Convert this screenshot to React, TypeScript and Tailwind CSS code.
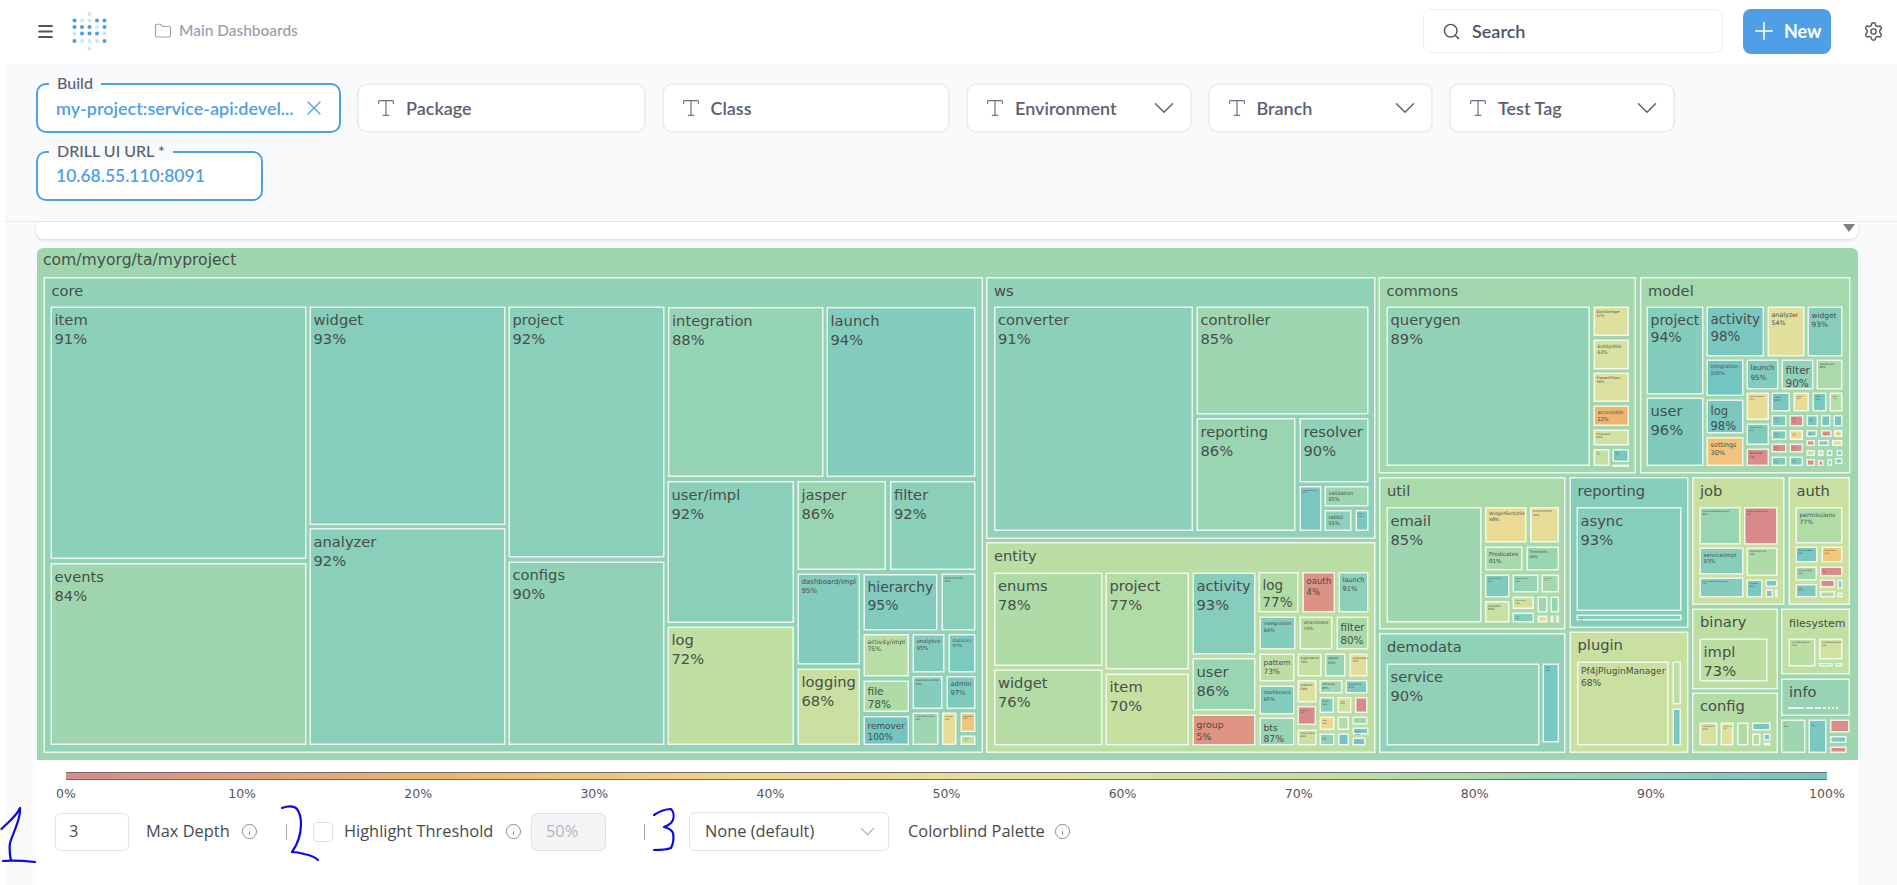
import { ChevronDown, Folder, Info, Menu, Plus, Search, Settings, Type, X } from "lucide-react";

type Node = [string, number | null, number, number, number, number, number?];

const stops: [number, number[]][] = [
  [0, [216, 138, 138]],
  [20, [236, 178, 108]],
  [40, [243, 214, 140]],
  [60, [219, 226, 161]],
  [70, [197, 224, 160]],
  [80, [170, 218, 169]],
  [90, [144, 209, 184]],
  [100, [115, 197, 193]],
];

function fill(p: number) {
  for (let i = 1; i < stops.length; i++) {
    if (p <= stops[i][0]) {
      const [a, ca] = stops[i - 1];
      const [b, cb] = stops[i];
      const t = (p - a) / (b - a);
      return `rgb(${ca.map((c, k) => Math.round(c + (cb[k] - c) * t)).join(",")})`;
    }
  }
  return "rgb(115,197,193)";
}

const W: Record<string, number> = {
  a: 0.61, b: 0.63, c: 0.55, d: 0.63, e: 0.62, f: 0.35, g: 0.63, h: 0.63, i: 0.28, j: 0.28, k: 0.58, l: 0.28, m: 0.97,
  n: 0.63, o: 0.61, p: 0.63, q: 0.63, r: 0.41, s: 0.52, t: 0.39, u: 0.63, v: 0.59, w: 0.82, x: 0.59, y: 0.59, z: 0.53,
  "/": 0.34, "%": 0.95,
};
const em = (s: string) => s.split("").reduce((n, ch) => n + (W[ch] ?? (ch >= "0" && ch <= "9" ? 0.636 : 0.66)), 0);

const containers: Node[] = [
  ["core", 89, 43.5, 276, 983, 752],
  ["ws", 90, 986, 276, 1375.5, 538],
  ["entity", 74, 986, 541, 1375.5, 752],
  ["commons", 83, 1378.5, 276, 1636, 472.5],
  ["model", 82, 1640, 276, 1850.5, 472.5],
  ["util", 80, 1379, 476, 1565.5, 628.5],
  ["demodata", 90, 1379, 632, 1565.5, 752],
  ["reporting", 93, 1569.5, 476, 1688.5, 627],
  ["plugin", 68, 1569.5, 630.5, 1688.5, 752],
  ["job", 69, 1692, 476, 1784.5, 604],
  ["auth", 68, 1788.5, 476, 1850, 604],
  ["binary", 73, 1692, 607.5, 1778, 688.5],
  ["config", 76, 1692, 691.5, 1778, 752],
  ["filesystem", 72, 1781, 607.5, 1850, 673.5, 11],
  ["info", 87, 1781, 677.5, 1850, 715],
];

const leaves: Node[] = [
  ["item", 91, 50.5, 305.5, 306.5, 558],
  ["events", 84, 50.5, 562, 306.5, 744],
  ["widget", 93, 309.5, 305.5, 505.5, 524],
  ["analyzer", 92, 309.5, 527, 505.5, 744],
  ["project", 92, 508.5, 305.5, 664.5, 556.5],
  ["configs", 90, 508.5, 560.5, 664.5, 744],
  ["integration", 88, 668, 306, 823.5, 476],
  ["launch", 94, 826.5, 306, 975.5, 476],
  ["user/impl", 92, 667.5, 480, 794, 622],
  ["log", 72, 667.5, 625.5, 794, 744],
  ["jasper", 86, 797.5, 480, 886, 569],
  ["filter", 92, 890, 480, 975.5, 569],
  ["dashboard/impl", 95, 797.5, 572.5, 860, 663.5],
  ["logging", 68, 797.5, 667.5, 860, 744],
  ["hierarchy", 95, 863.5, 573, 937.5, 629.5],
  ["timeline/impl", 92, 941.5, 572.5, 975.5, 629.5, 2.8],
  ["activity/impl", 75, 863.5, 633, 909, 675.5],
  ["analytics", 95, 912.5, 633, 944.5, 671.5],
  ["statistics", 97, 948.5, 633, 975.5, 671.5],
  ["preferences/impl", 94, 912.5, 675, 942.5, 708, 2.8],
  ["admin", 97, 946.5, 675, 975.5, 708],
  ["file", 78, 863.5, 679.5, 909, 711],
  ["remover", 100, 863.5, 715, 909, 744],
  ["organization/impl", 85, 912.5, 711.5, 938.5, 744, 2.2],
  ["storage", 52, 942, 711.5, 956.5, 744, 2],
  ["metadata", 30, 960.5, 711.5, 975.5, 731, 1.8],
  ["quality", 70, 960.5, 734.5, 975.5, 744, 1.5],

  ["converter", 91, 994, 305.5, 1193, 530],
  ["controller", 85, 1196.5, 305.5, 1368.5, 413.5],
  ["reporting", 86, 1196.5, 417, 1295.5, 530],
  ["resolver", 90, 1299.5, 417, 1368.5, 481.5],
  ["exception/impl", 98, 1299.5, 485, 1321.5, 530, 2],
  ["validation", 85, 1324.5, 485, 1368.5, 505.5, 5],
  ["rabbit", 91, 1324.5, 509, 1351.5, 530, 5],
  ["aop", 98, 1355.5, 509, 1368.5, 530, 1.8],

  ["enums", 78, 994, 571.5, 1102.5, 665],
  ["widget", 76, 994, 668.5, 1102.5, 744.5],
  ["project", 77, 1105.5, 571.5, 1189, 668.5],
  ["item", 70, 1105.5, 672.5, 1189, 744.5],
  ["activity", 93, 1192.5, 571.5, 1255.5, 653.5],
  ["user", 86, 1192.5, 657, 1255.5, 709.5],
  ["group", 5, 1192.5, 713.5, 1255.5, 744.5, 9.4],
  ["log", 77, 1258.5, 571, 1298.5, 611.5, 13.5],
  ["oauth", 4, 1302.5, 571, 1335, 611.5],
  ["launch", 91, 1338.5, 571, 1368.5, 611.5],
  ["integration", 94, 1259.5, 615.5, 1295.5, 648.5],
  ["attachment", 73, 1299.5, 615.5, 1332.5, 648.5],
  ["filter", 80, 1336.5, 615.5, 1368.5, 648.5],
  ["pattern", 73, 1259.5, 652.5, 1294.5, 680.5],
  ["dashboard", 95, 1259.5, 684.5, 1294.5, 713.5],
  ["bts", 87, 1259.5, 716.5, 1294.5, 744.5],
  ["organization", 70, 1297.5, 652.5, 1321.5, 675.5, 3],
  ["jasper", 88, 1325, 652.5, 1345.5, 675.5, 3.4],
  ["widgetstate", 52, 1349.5, 652.5, 1367.5, 675.5, 2.6],
  ["statistic", 60, 1297.5, 679, 1316.5, 701.5, 3.2],
  ["attribute", 85, 1319.5, 679, 1342.5, 692.5, 2.8],
  ["preference", 97, 1345.5, 679, 1367.5, 692.5, 2.4],
  ["ticket", 94, 1319.5, 696, 1334, 712, 2.2],
  ["clan", 65, 1337.5, 696, 1351.5, 712, 2],
  ["share", 0, 1355, 696, 1367.5, 712, 0.1],
  ["settings", 0, 1297.5, 705, 1316, 724, 2],
  ["user", 45, 1319.5, 715.5, 1334.5, 729, 2],
  ["meta", 76, 1337.5, 715.5, 1349, 729, 0.1],
  ["log", 84, 1352.5, 715.5, 1367.5, 723.5, 0.1],
  ["auth", 98, 1352.5, 726.5, 1368.5, 733.5, 2],
  ["attachments", 68, 1297.5, 728.5, 1316.5, 744.5, 2.4],
  ["type", 90, 1319.5, 732.5, 1334.5, 744.5, 1.8],
  ["key", 100, 1338, 732.5, 1349, 744.5, 0.1],
  ["sort", 100, 1352.5, 736.5, 1365.5, 744.5, 0.1],

  ["querygen", 89, 1386.5, 305.5, 1590, 465],
  ["BarAlikeType", 57, 1593.5, 305.5, 1629, 335, 3.6],
  ["EntityUtils", 62, 1593.5, 338.5, 1629, 368.5, 4.6],
  ["PresentFilters", 58, 1593.5, 371.5, 1629, 401, 3.5],
  ["accessible", 22, 1593.5, 404.5, 1629, 425, 5],
  ["Predicates", 64, 1593.5, 428.5, 1629, 444.5, 2.7],
  ["Utils", 70, 1593.5, 448, 1609.5, 465, 1.6],
  ["Maps", 98, 1612.5, 448, 1629, 461, 1.6],
  ["S", 80, 1612.5, 463.5, 1629, 466, 0.1],

  ["project", 94, 1646.5, 305.5, 1703.5, 393.5],
  ["user", 96, 1646.5, 396.5, 1703.5, 465],
  ["activity", 98, 1706.5, 305.5, 1764, 355.5],
  ["analyzer", 54, 1767.5, 305.5, 1804.5, 355.5, 6.3],
  ["widget", 93, 1807.5, 305.5, 1842.5, 355.5, 7.4],
  ["integration", 100, 1706.5, 358.5, 1743.5, 395, 5],
  ["log", 98, 1706.5, 398.5, 1743.5, 432.5, 11.5],
  ["settings", 30, 1706.5, 436, 1743.5, 465, 6.5],
  ["launch", 95, 1746.5, 358.5, 1778.5, 388.5],
  ["filter", 90, 1781.5, 358.5, 1813.5, 388.5, 10.5],
  ["dashboard", 80, 1816.5, 358.5, 1842.5, 388.5, 2.8],
  ["reportingstate", 50, 1746.5, 391.5, 1769, 419, 2],
  ["organization", 96, 1746.5, 422.5, 1769, 444, 2],
  ["launcher", 2, 1746.5, 447.5, 1769, 465, 3],
  ["issue", 98, 1771.5, 391.5, 1790, 410.5, 2.6],
  ["widget", 48, 1793.5, 391.5, 1809, 410.5, 1.8],
  ["filter", 98, 1812.5, 391.5, 1826.5, 410.5, 2],
  ["attrs", 75, 1829.5, 391.5, 1842.5, 410.5, 1.8],
  ["log", 97, 1771.5, 414, 1786.5, 425.5, 1.8],
  ["bts", 1, 1789.5, 414, 1803.5, 425.5, 1.8],
  ["tag", 98, 1806.5, 414, 1818, 425.5, 1.6],
  ["id", 100, 1821, 414, 1830.5, 425.5, 0.1],
  ["ns", 100, 1833.5, 414, 1842.5, 425.5, 0.1],
  ["pref", 97, 1771.5, 429, 1786.5, 439, 1.8],
  ["api", 45, 1789.5, 429, 1803, 439, 1.6],
  ["ann", 97, 1806.5, 429, 1817, 436, 1.2],
  ["red", 2, 1821, 429, 1831.5, 436, 1.2],
  ["yel", 45, 1834, 429, 1842.5, 436, 1.2],
  ["red", 2, 1771.5, 442.5, 1786.5, 451.5, 1.8],
  ["red", 2, 1789.5, 442.5, 1803, 451.5, 1.6],
  ["red", 2, 1806.5, 439, 1815, 445, 0.1],
  ["tea", 97, 1818, 439, 1829, 445, 0.1],
  ["yel", 45, 1832, 439, 1842.5, 445, 0.1],
  ["tea", 97, 1771.5, 455.5, 1786.5, 465, 1.6],
  ["tea", 97, 1789.5, 455.5, 1803, 465, 1.6],
  ["lim", 72, 1806.5, 449, 1815, 455, 0.1],
  ["lim", 72, 1818, 449, 1823.5, 455, 0.1],
  ["tea", 97, 1827, 449, 1832.5, 455, 0.1],
  ["tea", 97, 1836.5, 449, 1842.5, 455, 0.1],
  ["red", 2, 1806.5, 458, 1815, 465, 0.1],
  ["red", 2, 1818, 459, 1823.5, 465, 0.1],
  ["tea", 97, 1827.5, 458, 1832, 465, 0.1],
  ["tea", 97, 1835, 457, 1842.5, 463, 0.1],

  ["email", 85, 1386.5, 506, 1481.5, 621.5],
  ["WidgetSortUtils", 48, 1485, 506, 1526.5, 541.5, 4.6],
  ["CommonUtils", 52, 1530, 506, 1559, 541.5, 2.8],
  ["Predicates", 81, 1485, 545.5, 1522.5, 569.5, 5.6],
  ["TimeUtils", 86, 1526.5, 545.5, 1559, 569.5, 3.8],
  ["ExceptionUtils", 96, 1485, 573.5, 1509.5, 596.5, 2],
  ["SecurityUtils", 88, 1512.5, 573.5, 1538.5, 591.5, 2],
  ["DateUtils", 82, 1541.5, 573.5, 1559, 591.5, 1.6],
  ["SortUtils", 68, 1485, 600, 1509.5, 621.5, 3],
  ["ActionUtils", 64, 1512.5, 595.5, 1534, 608, 2],
  ["Ns", 84, 1537.5, 595.5, 1547.5, 611.5, 0.1],
  ["Bs", 88, 1550.5, 595.5, 1559, 611.5, 0.1],
  ["Logs", 94, 1512.5, 611.5, 1534, 621.5, 1.6],
  ["Cs", 52, 1537.5, 614.5, 1547.5, 621.5, 0.1],
  ["As", 100, 1550.5, 614.5, 1553.5, 621.5, 0.1],
  ["Ds", 100, 1556, 614.5, 1559, 621.5, 0.1],

  ["service", 90, 1386.5, 662.5, 1539.5, 744.5],
  ["impl", 98, 1542.5, 662.5, 1559, 741.5, 2],
  ["async", 93, 1576.5, 506, 1681.5, 610],
  ["jobs", 93, 1576.5, 613.5, 1681.5, 619.5, 1.6],
  ["Pf4jPluginManager", 68, 1577, 660.5, 1668.5, 744.5],
  ["a", 74, 1672.5, 660.5, 1681, 703.5, 0.1],
  ["b", 98, 1672.5, 707.5, 1681, 744.5, 0.1],

  ["ConsolidatedPluginJob", 86, 1699.5, 506, 1740.5, 543.5, 2.4],
  ["FlushingSessions", 0, 1744, 506, 1777.5, 543.5, 2.4],
  ["service/impl", 93, 1699.5, 546.5, 1743.5, 573.5, 5.4],
  ["LoadPluginJob", 78, 1746.5, 546.5, 1777.5, 575, 2.4],
  ["InterruptBroadcastPluginsJob", 94, 1699.5, 576.5, 1743.5, 596.5, 1.8],
  ["CleanJob", 98, 1746.5, 578.5, 1762.5, 596.5, 2],
  ["a", 98, 1765.5, 578.5, 1777.5, 586, 0.1],
  ["b", 98, 1765.5, 588.5, 1773, 596.5, 0.1],
  ["c", 76, 1775, 588.5, 1777.5, 596.5, 0.1],
  ["permissions", 77, 1795.5, 506, 1842.5, 542.5, 6],
  ["ReportingRole", 98, 1795.5, 545.5, 1817.5, 561.5, 2],
  ["ProjectRole", 32, 1821.5, 545.5, 1842.5, 561.5, 2],
  ["AuthorityRole", 84, 1795.5, 565.5, 1817, 579.5, 2],
  ["Rr", 1, 1820, 565.5, 1842.5, 575.5, 1.8],
  ["Utils", 97, 1795.5, 583, 1817, 596.5, 2],
  ["Rs", 1, 1820, 578.5, 1835, 586.5, 0.1],
  ["Ts", 98, 1837.5, 578.5, 1842.5, 588, 0.1],
  ["Gs", 78, 1820, 590, 1835, 596.5, 0.1],
  ["Hs", 76, 1837.5, 591.5, 1842.5, 596.5, 0.1],
  ["impl", 73, 1699.5, 637.5, 1767.5, 680.5],
  ["configure", 62, 1699.5, 721.5, 1717.5, 744.5, 2.4],
  ["LogManage", 55, 1720.5, 721.5, 1733.5, 744.5, 1.6],
  ["Metrics", 78, 1737, 721.5, 1748.5, 744.5, 0.1],
  ["a", 98, 1752, 721.5, 1770.5, 729.5, 0.1],
  ["b", 76, 1752, 732.5, 1760.5, 744.5, 0.1],
  ["c", 98, 1763.5, 732.5, 1770.5, 739.5, 0.1],
  ["d", 80, 1763.5, 741.5, 1770.5, 744.5, 0.1],
  ["LocalDataStore", 74, 1788.5, 637.5, 1815.5, 665.5, 2.4],
  ["LocalUserStorage", 64, 1819, 637.5, 1842.5, 658.5, 2.2],
  ["a", 98, 1819, 662, 1832.5, 665.5, 0.1],
  ["b", 98, 1835.5, 662, 1842.5, 665.5, 0.1],
  ["a", 84, 1781, 718.5, 1805.5, 752, 2],
  ["b", 98, 1808.5, 718.5, 1826.5, 752, 1.6],
  ["c", 2, 1830, 718.5, 1849.5, 731.5, 0.1],
  ["d", 97, 1830, 735, 1846.5, 742, 0.1],
  ["e", 2, 1830, 745.5, 1846.5, 752, 0.1],
];

function Leaf({ n }: { n: Node }) {
  const [label, pct, x1, y1, x2, y2, forced] = n;
  const w = x2 - x1;
  const h = y2 - y1;
  const p = pct ?? 0;
  const ps = `${p}%`;
  const fit = Math.min(14.7, (w - 8) / Math.max(em(label), em(ps)), (h - 5) / 2.5);
  const fs = forced ?? fit;
  const pad = fs < 4 ? 3 : 4;
  return (
    <g>
      <rect x={x1 + 0.75} y={y1 + 0.75} width={w - 1.5} height={h - 1.5} fill={fill(p)} stroke="#fff" strokeOpacity={0.8} strokeWidth={1.5} />
      {fs > 1 && (
        <text x={x1 + pad} fontSize={fs} fill="#474e4c">
          <tspan x={x1 + pad} y={y1 + pad - 0.6 + fs * 1.05}>{label}</tspan>
          <tspan x={x1 + pad} y={y1 + pad - 0.6 + fs * 2.32}>{ps}</tspan>
        </text>
      )}
    </g>
  );
}

function Container({ n }: { n: Node }) {
  const [label, pct, x1, y1, x2, y2, forced] = n;
  return (
    <g>
      <rect x={x1 + 0.75} y={y1 + 0.75} width={x2 - x1 - 1.5} height={y2 - y1 - 1.5} fill={fill(pct ?? 0)} stroke="#fff" strokeOpacity={0.8} strokeWidth={1.5} />
      <text x={x1 + 8} y={y1 + 18.6} fontSize={forced ?? 14.7} fill="#474e4c">{label}</text>
    </g>
  );
}

function Treemap() {
  return (
    <svg viewBox="37 247 1821 512" width={1821} height={512} className="block" style={{ fontFamily: '"DejaVu Sans", sans-serif' }}>
      <path d="M37 759V253a6 6 0 0 1 6-6H1852a6 6 0 0 1 6 6V759Z" fill={fill(84)} />
      <text x={43} y={264} fontSize={15.6} fill="#474e4c">com/myorg/ta/myproject</text>
      {containers.map((n, i) => <Container key={i} n={n} />)}
      {leaves.map((n, i) => <Leaf key={i} n={n} />)}
      <g stroke="#fff" strokeWidth={1.5}>
        <path d="M1788 707H1804M1806 707H1813M1815 707H1821M1823 707H1826M1828 707H1830M1832 707H1834M1836 707H1838" />
      </g>
    </svg>
  );
}

function FieldLabel({ children }: { children: string }) {
  return (
    <span className="absolute -top-[11px] left-[11px] bg-[#f9fafc] px-2 text-[16px] leading-[18px] font-medium text-[#5b6170]">
      {children}
    </span>
  );
}

function FilterField({ label, width, chevron }: { label: string; width: string; chevron?: boolean }) {
  return (
    <div className={`${width} flex h-[50px] items-center rounded-[10px] border-2 border-[#eeeef1] bg-white pr-[9px] pl-[16px]`}>
      <Type size={22} strokeWidth={1.3} className="shrink-0 text-[#6b7280]" />
      <span className="ml-[9px] flex-1 text-[18px] font-semibold text-[#5b6170]">{label}</span>
      {chevron && <ChevronDown size={34} strokeWidth={1} className="text-[#5b6170]" />}
    </div>
  );
}

const Hint = () => <Info size={17} strokeWidth={1.4} className="text-[#8a8f98]" />;

function Logo() {
  const rows = ["..L..", "DLLDD", "DDDLD", "LDDDL", "DLLLD", "..L.."];
  const ys = [14, 20.5, 27, 33.5, 41, 48.5];
  const xs = [74.5, 82, 89.5, 97, 104.5];
  return (
    <svg viewBox="70 10 40 42" width={40} height={42}>
      {rows.map((r, j) =>
        r.split("").map((c, i) =>
          c === "." ? null : <circle key={`${i}-${j}`} cx={xs[i]} cy={ys[j]} r={2} fill={c === "D" ? "#4a9de6" : "#cfe4f8"} />
        )
      )}
    </svg>
  );
}

export default function App() {
  return (
    <div className="relative h-[885px] w-[1897px] overflow-hidden bg-white" style={{ fontFamily: 'Lato, "Open Sans", sans-serif' }}>
      <header className="flex h-[64px] items-center bg-white pb-[2px]">
        <Menu size={19} strokeWidth={2.6} className="ml-[36px] text-[#4b5563]" />
        <div className="ml-[15px]"><Logo /></div>
        <Folder size={18} strokeWidth={1.5} className="ml-[44px] text-[#9ca3af]" />
        <span className="ml-[7px] text-[15.4px] font-semibold text-[#9ca3af]">Main Dashboards</span>
        <div className="ml-auto flex h-[44px] w-[300px] items-center rounded-lg border border-[#eceff3] pl-[18px]">
          <Search size={19} strokeWidth={1.8} className="text-[#4b5563]" />
          <span className="ml-[11px] text-[18px] font-semibold text-[#4b5563]">Search</span>
        </div>
        <div className="mr-[66px] ml-[20px] flex h-[45px] w-[88px] items-center gap-[6px] rounded-lg bg-[#4f9fe6] pl-[7px] text-[18px] font-bold text-white">
          <Plus size={28} strokeWidth={1.4} />
          <span>New</span>
        </div>
      </header>
      <Settings size={21} strokeWidth={1.6} className="absolute top-[21px] left-[1863px] text-[#4b5563]" />

      <div className="ml-[5px] h-[158px] border-b border-[#e8e9ec] bg-[#f9fafc] pt-[19px] pl-[31px]">
        <div className="flex gap-[16px]">
          <div className="relative flex h-[50px] w-[305px] items-center rounded-[10px] border-2 border-[#4f9fe6] bg-white pr-[13px] pl-[18px]">
            <FieldLabel>Build</FieldLabel>
            <span className="flex-1 truncate text-[18px] font-semibold text-[#4f9fe6]">my-project:service-api:devel...</span>
            <X size={24} strokeWidth={1.2} className="shrink-0 text-[#4f9fe6]" />
          </div>
          <FilterField label="Package" width="w-[288.5px]" />
          <FilterField label="Class" width="w-[288.5px]" />
          <FilterField label="Environment" width="w-[225.5px]" chevron />
          <FilterField label="Branch" width="w-[225.5px]" chevron />
          <FilterField label="Test Tag" width="w-[225.5px]" chevron />
        </div>
        <div className="relative mt-[18px] flex h-[50px] w-[227px] items-center rounded-[10px] border-2 border-[#4f9fe6] bg-white pl-[18px]">
          <FieldLabel>DRILL UI URL *</FieldLabel>
          <span className="text-[17.5px] font-semibold text-[#4f9fe6]">10.68.55.110:8091</span>
        </div>
      </div>

      <div className="ml-[5px] h-[663px] bg-[#f9fafc] pl-[31px]">
        <div className="relative h-[17px] w-[1822px] rounded-b-lg bg-white shadow-[0_1px_3px_rgba(0,0,0,0.15)]">
          <span className="absolute top-[2px] right-[3px] h-0 w-0 border-x-[6px] border-t-[8px] border-x-transparent border-t-[#808080]" />
        </div>
        <div className="mt-[9px] w-[1822px] pl-px"><Treemap /></div>
        <div className="h-[126px] w-[1822px] bg-white pt-[12px] pl-[30px]">
          <div className="h-[8px] w-[1761px] border-y-[1.5px] border-[#6b6b6b] bg-[linear-gradient(to_right,#d88a8a_0%,#ecb26c_20%,#f3d68c_40%,#dbe2a1_60%,#c5e0a0_70%,#aadaa9_80%,#90d1b8_90%,#73c5c1_100%)]" />
          <div className="mt-[6px] flex w-[1761px] justify-between text-[12.5px] leading-[16px] text-[#555]" style={{ fontFamily: '"DejaVu Sans", sans-serif' }}>
            {["0%", "10%", "20%", "30%", "40%", "50%", "60%", "70%", "80%", "90%", "100%"].map((t) => (
              <span key={t} className="flex w-0 justify-center whitespace-nowrap">{t}</span>
            ))}
          </div>
          <div className="mt-[10px] -ml-[11px] flex items-center text-[16.4px] text-[#4a4a4a]" style={{ fontFamily: '"Open Sans", sans-serif' }}>
            <div className="flex h-[38px] w-[74px] items-center rounded-md border border-[#e3e4e7] pl-[13px]">3</div>
            <span className="ml-[17px] w-[84px] whitespace-nowrap">Max Depth</span>
            <span className="ml-[11px]"><Hint /></span>
            <span className="ml-[28px] h-[16px] w-px bg-[#aaa]" />
            <span className="ml-[26px] h-[20px] w-[20px] rounded-[5px] border border-[#dcdde0]" />
            <span className="ml-[11px] w-[153px] whitespace-nowrap">Highlight Threshold</span>
            <span className="ml-[8px]"><Hint /></span>
            <div className="ml-[9px] flex h-[38px] w-[75px] items-center rounded-md border border-[#dfe0e3] bg-[#f3f4f6] pl-[14px] text-[#b5b7bb]">50%</div>
            <span className="ml-[38px] h-[16px] w-px bg-[#aaa]" />
            <div className="ml-[44px] flex h-[39px] w-[200px] items-center rounded-md border border-[#e3e4e7] pr-[8px] pl-[15px]">
              <span className="flex-1">None (default)</span>
              <ChevronDown size={25} strokeWidth={1} className="text-[#a0a4aa]" />
            </div>
            <span className="ml-[19px] w-[137px] whitespace-nowrap">Colorblind Palette</span>
            <span className="ml-[9px]"><Hint /></span>
          </div>
        </div>
      </div>

      <svg className="pointer-events-none absolute top-0 left-0" width={1897} height={885} fill="none" stroke="#0a0ae0" strokeWidth={2.2} strokeLinecap="round" strokeLinejoin="round">
        <path d="M1.5 829C8 822 16 817 20 808C21 820 13 832 10 843C9 850 10 856 11 861M3 861C14 860 26 861 35 862" />
        <path d="M282 808C288 806 294 806 297 809C300 813 301 818 301 824C301 834 297 845 292 852C298 852 301 853 304 854C310 855 315 857 318 860" />
        <path d="M654 815C660 811 665 809 671 809C674 812 674 817 673 820C671 824 667 826 664 827C668 828 672 830 673 833C674 838 673 844 671 848C666 850 660 850 654 850" />
      </svg>
    </div>
  );
}
